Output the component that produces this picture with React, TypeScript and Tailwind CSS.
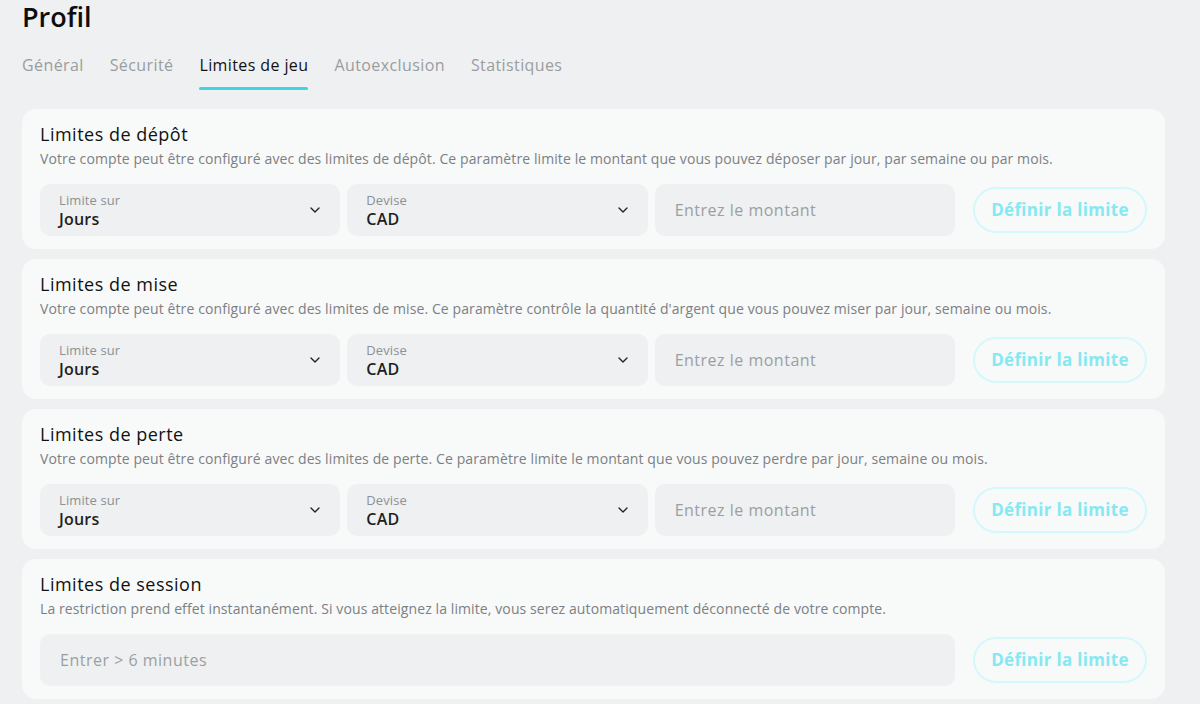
import React from "react";
import { ChevronDown } from "lucide-react";

const tabs = ["Général", "Sécurité", "Limites de jeu", "Autoexclusion", "Statistiques"];

const sections = [
  {
    title: "Limites de dépôt",
    text: "Votre compte peut être configuré avec des limites de dépôt. Ce paramètre limite le montant que vous pouvez déposer par jour, par semaine ou par mois.",
  },
  {
    title: "Limites de mise",
    text: "Votre compte peut être configuré avec des limites de mise. Ce paramètre contrôle la quantité d'argent que vous pouvez miser par jour, semaine ou mois.",
  },
  {
    title: "Limites de perte",
    text: "Votre compte peut être configuré avec des limites de perte. Ce paramètre limite le montant que vous pouvez perdre par jour, semaine ou mois.",
  },
];

function SelectBox({ label, value }: { label: string; value: string }) {
  return (
    <button className="w-full h-[52px] rounded-[10px] bg-[#eef0f1] pl-[19px] pr-[17px] flex items-center justify-between text-left">
      <div className="flex flex-col">
        <span className="text-[13px] leading-[17px] tracking-[0.1px] text-[#8d9194]">{label}</span>
        <span className="text-[16px] leading-[20px] tracking-[0.2px] font-semibold text-[#1d1f21]">{value}</span>
      </div>
      <ChevronDown size={16} strokeWidth={2} className="text-[#222]" />
    </button>
  );
}

function SetButton() {
  return (
    <button className="justify-self-end w-[174px] h-[46px] rounded-full border-2 border-[#d4f8fb] text-[17px] tracking-[0.3px] font-bold text-[#86e8f1]">
      Définir la limite
    </button>
  );
}

function Card({ title, text, children }: { title: string; text: string; children: React.ReactNode }) {
  return (
    <div className="rounded-[14px] bg-[#f8f9f9] px-[18px] pt-[12px] pb-[13px]">
      <h2 className="text-[18px] leading-[26px] tracking-[0.5px] font-medium text-[#111]">{title}</h2>
      <p className="mt-[3px] text-[14px] leading-[18px] tracking-[0.1px] text-[#7c8084]">{text}</p>
      <div className="mt-[16px] grid grid-cols-[repeat(3,minmax(0,1fr))_185px] items-center gap-x-[7px]">
        {children}
      </div>
    </div>
  );
}

const inputCls =
  "w-full min-w-0 h-[52px] rounded-[10px] bg-[#eef0f1] px-[20px] text-[16px] tracking-[0.5px] font-medium text-[#222] placeholder:text-[#9c9fa2] outline-none";

export default function App() {
  return (
    <div
      className="min-h-screen bg-[#eef0f1] pl-[22px] pr-[35px]"
      style={{ fontFamily: '"Open Sans", "Noto Sans", sans-serif' }}
    >
      <h1 className="pt-[1px] text-[27px] leading-[32px] font-semibold text-[#0d0d0d]">Profil</h1>
      <nav className="mt-[22px] flex gap-[26px]">
        {tabs.map((t) => {
          const active = t === "Limites de jeu";
          return (
            <div key={t} className="flex flex-col">
              <span
                className={`text-[16px] leading-[20px] tracking-[0.4px] font-medium ${
                  active ? "text-[#111]" : "text-[#9a9d9f]"
                }`}
              >
                {t}
              </span>
              <span className={`mt-[12px] h-[3px] rounded-full ${active ? "bg-[#3dd6e2]" : "bg-transparent"}`} />
            </div>
          );
        })}
      </nav>
      <div className="mt-[19px] flex flex-col gap-[10px]">
        {sections.map((s) => (
          <Card key={s.title} title={s.title} text={s.text}>
            <SelectBox label="Limite sur" value="Jours" />
            <SelectBox label="Devise" value="CAD" />
            <input placeholder="Entrez le montant" className={inputCls} />
            <SetButton />
          </Card>
        ))}
        <Card
          title="Limites de session"
          text="La restriction prend effet instantanément. Si vous atteignez la limite, vous serez automatiquement déconnecté de votre compte."
        >
          <input placeholder="Entrer > 6 minutes" className={`${inputCls} col-span-3`} />
          <SetButton />
        </Card>
      </div>
    </div>
  );
}
